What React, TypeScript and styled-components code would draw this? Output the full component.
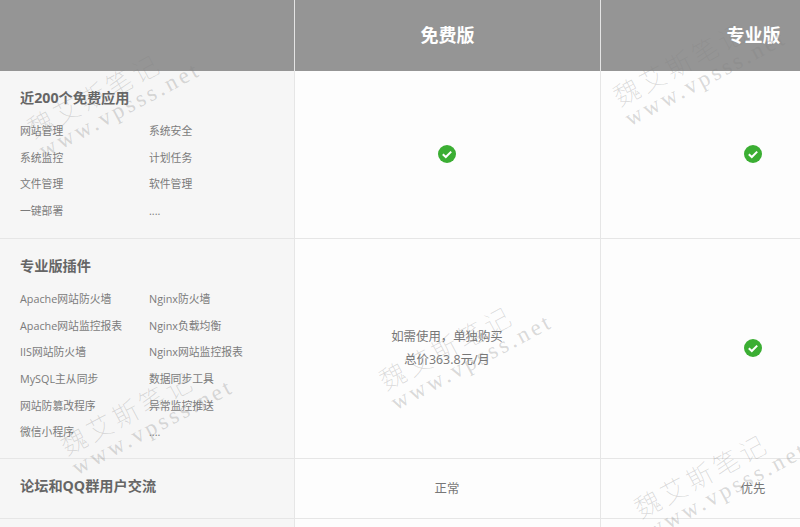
import React from 'react'
import styled, { createGlobalStyle } from 'styled-components'

const GlobalStyle = createGlobalStyle`
  html, body {
    margin: 0;
    padding: 0;
    background: #fff;
    overflow: hidden;
  }
  body {
    font-family: "Open Sans", "Noto Sans CJK SC", "Liberation Sans", sans-serif;
  }
`

const Page = styled.div`
  position: relative;
  width: 800px;
  height: 527px;
  overflow: hidden;
`

const Table = styled.div`
  display: grid;
  grid-template-columns: 294px 306px 306px;
  grid-template-rows: 71px 168px 220px 60px 60px;
  width: 906px;
`

const HeadCell = styled.div<{ $first?: boolean }>`
  display: flex;
  align-items: center;
  justify-content: center;
  padding-bottom: 3px;
  background: #959595;
  color: #fff;
  font-size: 18px;
  font-weight: 700;
  box-sizing: border-box;
  border-left: ${({ $first }) => ($first ? 'none' : '1px solid #e4e4e4')};
`

const Feature = styled.div`
  padding: 16px 20px 0;
  background: #f6f6f6;
  border-bottom: 1px solid #e6e6e6;
  box-sizing: border-box;
  color: #7b7b7b;
`

const FeatureTitle = styled.div`
  color: #666;
  font-size: 14.2px;
  font-weight: 700;
  line-height: 21px;
  margin-bottom: 10px;
`

const FeatureList = styled.ul`
  display: grid;
  grid-template-columns: 129px 129px;
  grid-auto-rows: 26.67px;
  margin: 0;
  padding: 0;
  list-style: none;
  font-size: 10.8px;
  line-height: 26.67px;
  white-space: nowrap;
`

const Value = styled.div`
  display: flex;
  flex-direction: column;
  align-items: center;
  justify-content: center;
  padding: 0 1px 1px 0;
  background: #fdfdfd;
  border-left: 1px solid #e6e6e6;
  border-bottom: 1px solid #e6e6e6;
  box-sizing: border-box;
  color: #777;
  font-size: 12.4px;
  line-height: 23px;
`

const Overlay = styled.div`
  position: absolute;
  inset: 0;
  pointer-events: none;
`

const Mark = styled.div<{ $x: number; $y: number }>`
  position: absolute;
  left: ${({ $x }) => $x}px;
  top: ${({ $y }) => $y}px;
  transform: rotate(-28deg);
  transform-origin: 0 0;
  color: rgba(130, 130, 130, 0.3);
  font-family: "Liberation Serif", serif;
  white-space: nowrap;
`

const MarkName = styled.div`
  font-family: "Noto Sans CJK SC", serif;
  font-size: 26px;
  font-weight: 100;
  line-height: 28px;
  letter-spacing: 3.5px;
`

const MarkUrl = styled.div`
  font-size: 23px;
  line-height: 24px;
  letter-spacing: 3.2px;
`

const CheckIcon = () => (
  <svg width="18" height="18" viewBox="0 0 18 18">
    <circle cx="9" cy="9" r="9" fill="#3bae33" />
    <path d="M4.8 9.2 L7.8 12 L13.2 6.6" fill="none" stroke="#fff" strokeWidth="2" />
  </svg>
)

const apps = ['网站管理', '系统安全', '系统监控', '计划任务', '文件管理', '软件管理', '一键部署', '....']
const plugins = [
  'Apache网站防火墙', 'Nginx防火墙',
  'Apache网站监控报表', 'Nginx负载均衡',
  'IIS网站防火墙', 'Nginx网站监控报表',
  'MySQL主从同步', '数据同步工具',
  '网站防篡改程序', '异常监控推送',
  '微信小程序', '....',
]
const marks = [
  { x: 22, y: 117 },
  { x: 608, y: 85 },
  { x: 374, y: 369 },
  { x: 55, y: 434 },
  { x: 629, y: 497 },
]

export default function App() {
  return (
    <Page>
      <GlobalStyle />
      <Table>
        <HeadCell $first />
        <HeadCell>免费版</HeadCell>
        <HeadCell>专业版</HeadCell>

        <Feature>
          <FeatureTitle>近200个免费应用</FeatureTitle>
          <FeatureList>
            {apps.map(a => <li key={a}>{a}</li>)}
          </FeatureList>
        </Feature>
        <Value><CheckIcon /></Value>
        <Value><CheckIcon /></Value>

        <Feature>
          <FeatureTitle>专业版插件</FeatureTitle>
          <FeatureList>
            {plugins.map(a => <li key={a}>{a}</li>)}
          </FeatureList>
        </Feature>
        <Value>
          <div>如需使用，单独购买</div>
          <div>总价363.8元/月</div>
        </Value>
        <Value><CheckIcon /></Value>

        <Feature>
          <FeatureTitle>论坛和QQ群用户交流</FeatureTitle>
        </Feature>
        <Value>正常</Value>
        <Value>优先</Value>

        <Feature />
        <Value />
        <Value />
      </Table>
      <Overlay>
        {marks.map(m => (
          <Mark key={m.x} $x={m.x} $y={m.y}>
            <MarkName>魏艾斯笔记</MarkName>
            <MarkUrl>www.vpsss.net</MarkUrl>
          </Mark>
        ))}
      </Overlay>
    </Page>
  )
}
